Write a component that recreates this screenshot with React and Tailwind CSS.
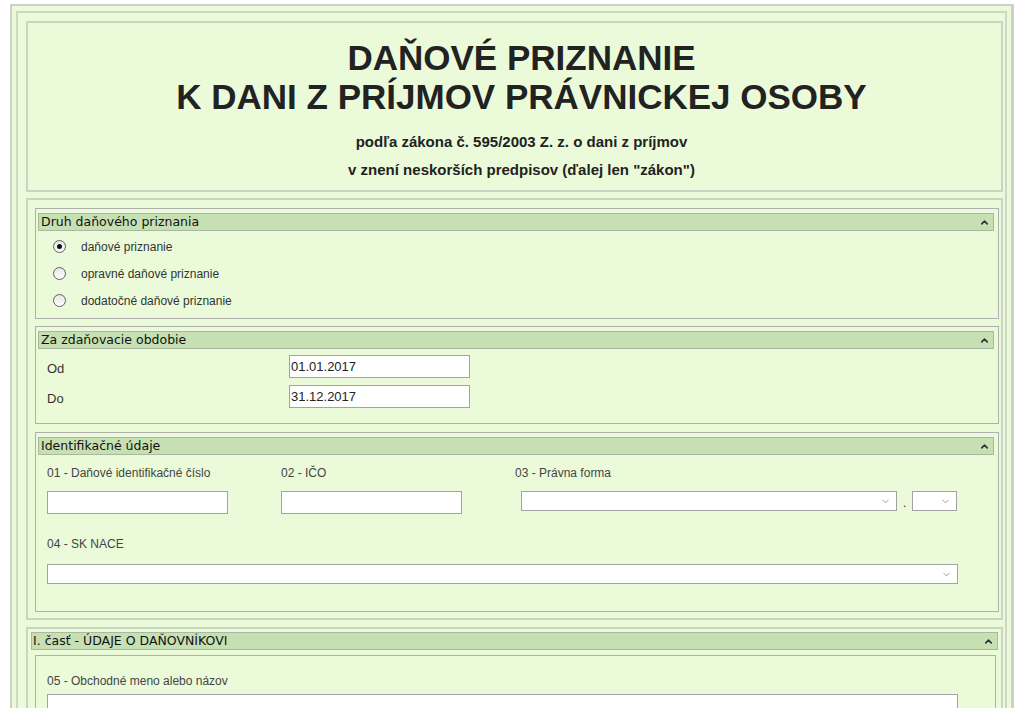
import { ChevronUp, ChevronDown } from 'lucide-react';

const bar = "Liberation Sans, Arial, sans-serif";

function Section({ title, children, className = '' }) {
  return (
    <div className={`border border-[#b0b0b0] pl-[2px] pr-[4px] pt-[4px] ${className}`}>
      <div className="flex h-[18px] items-center justify-between border border-[#a9b9a0] bg-[#c6e0b4] pl-[2px] pr-[3px]">
        <span className="text-[12.5px] leading-none text-[#111]" style={{ fontFamily: 'DejaVu Sans, Verdana, sans-serif' }}>{title}</span>
        <ChevronUp size={11} strokeWidth={3.5} className="text-[#333]" />
      </div>
      {children}
    </div>
  );
}

function Radio({ checked, label }) {
  return (
    <div className="flex h-[27px] items-center pl-[15px]">
      <span className="flex h-[13px] w-[13px] items-center justify-center rounded-full border border-[#606060] bg-gradient-to-b from-[#e6e6e6] to-white">
        {checked && <span className="h-[5px] w-[5px] rounded-full bg-[#111]" />}
      </span>
      <span className="ml-[15px] text-[12px] text-[#333]">{label}</span>
    </div>
  );
}

function Input({ value, className = '' }) {
  return (
    <div className={`flex h-[23px] items-center border border-[#a3a3a3] bg-white pl-[1px] text-[13px] text-[#222] ${className}`}>
      {value}
    </div>
  );
}

function Select({ className = '' }) {
  return (
    <div className={`flex h-[20px] items-center justify-end border border-[#a3a3a3] bg-white pr-[5px] ${className}`}>
      <ChevronDown size={11} strokeWidth={1.5} className="text-[#777]" />
    </div>
  );
}

export default function App() {
  return (
    <div className="min-h-[708px] bg-white px-[10px] pt-[4px]" style={{ fontFamily: bar }}>
      <div className="border-2 border-r-[3px] border-[#cfcfcf] bg-[#ebfbd9] pl-[4px] pr-[4px] pt-[5px]">
        <div className="border-2 border-[#cdd8c4] pb-[10px] pl-[8px] pr-[2px] pt-[8px]">
          {/* header */}
          <div className="flex h-[171px] flex-col items-center border-2 border-[#cad4c2] pl-[14px] pt-[15px] text-[#222]">
            <h1 className="text-center text-[35px] font-bold leading-[39px]">
              DAŇOVÉ PRIZNANIE
              <br />
              K DANI Z PRÍJMOV PRÁVNICKEJ OSOBY
            </h1>
            <p className="mt-[12px] text-[15px] font-bold leading-[28px]">podľa zákona č. 595/2003 Z. z. o dani z príjmov</p>
            <p className="text-[15px] font-bold leading-[28px]">v znení neskorších predpisov (ďalej len "zákon")</p>
          </div>

          {/* group 1 */}
          <div className="mt-[6px] border-2 border-[#cad4c2] pb-[6px] pl-[7px] pr-[2px] pt-[8px]">
            <Section title="Druh daňového priznania" className="pb-[4px]">
              <div className="pt-[2px]">
                <Radio checked label="daňové priznanie" />
                <Radio label="opravné daňové priznanie" />
                <Radio label="dodatočné daňové priznanie" />
              </div>
            </Section>

            <Section title="Za zdaňovacie obdobie" className="mt-[7px] pb-[15px]">
              <div className="flex items-center pt-[6px]">
                <span className="w-[251px] pl-[9px] pt-[4px] text-[13px] text-[#333]">Od</span>
                <Input value="01.01.2017" className="w-[181px]" />
              </div>
              <div className="mt-[6px] flex items-center">
                <span className="w-[251px] pl-[9px] pt-[4px] text-[13px] text-[#333]">Do</span>
                <Input value="31.12.2017" className="w-[181px]" />
              </div>
            </Section>

            <Section title="Identifikačné údaje" className="mt-[8px] pb-[27px]">
              <div className="flex pl-[9px] pt-[9px]">
                <div className="w-[234px]">
                  <div className="h-[16px] text-[12px] text-[#444]">01 - Daňové identifikačné číslo</div>
                  <Input className="mt-[11px] w-[181px]" />
                </div>
                <div className="w-[234px]">
                  <div className="h-[16px] text-[12px] text-[#444]">02 - IČO</div>
                  <Input className="mt-[11px] w-[181px]" />
                </div>
                <div>
                  <div className="h-[16px] text-[12px] text-[#444]">03 - Právna forma</div>
                  <div className="mt-[11px] flex items-start pl-[6px]">
                    <Select className="w-[376px]" />
                    <span className="mx-[6px] mt-[6px] text-[12px] leading-[12px] text-[#333]">.</span>
                    <Select className="w-[45px]" />
                  </div>
                </div>
              </div>
              <div className="pl-[9px] pt-[21px]">
                <div className="h-[16px] text-[12px] text-[#444]">04 - SK NACE</div>
                <Select className="mt-[13px] w-[911px]" />
              </div>
            </Section>
          </div>

          {/* group 2 */}
          <div className="mt-[7px] border-2 border-[#cad4c2] pl-[3px] pr-[3px] pt-[3px]">
            <div className="flex h-[18px] items-center justify-between border border-[#a9b9a0] bg-[#c6e0b4] pl-[1px] pr-[3px]">
              <span className="text-[12.5px] leading-none text-[#111]" style={{ fontFamily: 'DejaVu Sans, Verdana, sans-serif' }}>I. časť - ÚDAJE O DAŇOVNÍKOVI</span>
              <ChevronUp size={11} strokeWidth={3.5} className="text-[#333]" />
            </div>
            <div className="ml-[4px] mr-[2px] mt-[5px] border border-[#b0b0b0] pb-[20px] pl-[11px] pt-[16px]">
              <div className="h-[16px] text-[12px] text-[#444]">05 - Obchodné meno alebo názov</div>
              <Input className="mt-[6px] w-[911px]" />
            </div>
          </div>
        </div>
      </div>
    </div>
  );
}
